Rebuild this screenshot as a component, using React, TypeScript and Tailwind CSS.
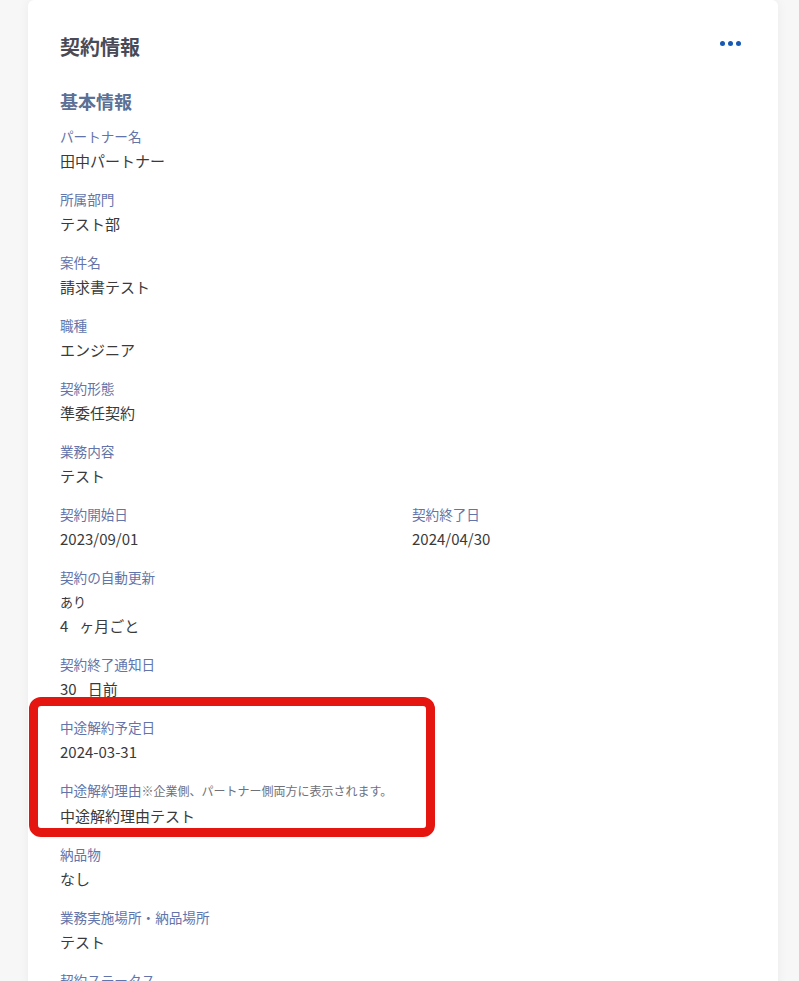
import React from "react";

const F = { fontFamily: '"Noto Sans CJK JP", "Noto Sans", sans-serif' };

function Item({ label, children, note }: { label: string; children: React.ReactNode; note?: string }) {
  return (
    <div className="mb-[16px]">
      <div className="text-[13.6px] leading-[20px] text-[#6274aa]">
        {label}
        {note && <span className="text-[12px] text-[#707078]">{note}</span>}
      </div>
      <div className="mt-[3px] text-[15px] leading-[24px] text-[#3a3a3a]">{children}</div>
    </div>
  );
}

export default function App() {
  return (
    <div style={F} className="relative min-h-[981px] w-[799px] overflow-hidden bg-[#f7f7f7]">
      <div className="ml-[28px] w-[750px] rounded-[6px] bg-white px-[32px] pb-[40px] pt-[33px] shadow-[0_0_12px_rgba(0,0,0,0.05)]">
        <div className="flex items-center justify-between">
          <h1 className="text-[20px] font-bold leading-[28px] text-[#4a4a56]">契約情報</h1>
          <button className="-mt-[8px] mr-[5px] flex items-center gap-[3px]">
            <span className="h-[5px] w-[5px] rounded-full bg-[#1658b4]" />
            <span className="h-[5px] w-[5px] rounded-full bg-[#1658b4]" />
            <span className="h-[5px] w-[5px] rounded-full bg-[#1658b4]" />
          </button>
        </div>
        <h2 className="mt-[27px] mb-[12px] text-[18px] font-bold leading-[26px] text-[#5a7096]">基本情報</h2>
        <Item label="パートナー名">田中パートナー</Item>
        <Item label="所属部門">テスト部</Item>
        <Item label="案件名">請求書テスト</Item>
        <Item label="職種">エンジニア</Item>
        <Item label="契約形態">準委任契約</Item>
        <Item label="業務内容">テスト</Item>
        <div className="grid grid-cols-2 gap-x-[18px]">
          <Item label="契約開始日">2023/09/01</Item>
          <Item label="契約終了日">2024/04/30</Item>
        </div>
        <div className="mb-[16px]">
          <div className="text-[13.6px] leading-[20px] text-[#6274aa]">契約の自動更新</div>
          <div className="mt-[5px] text-[13px] leading-[20px] text-[#3a3a3a]">あり</div>
          <div className="mt-[2px] text-[15px] leading-[24px] text-[#3a3a3a]">
            4<span className="ml-[11px]">ヶ月ごと</span>
          </div>
        </div>
        <Item label="契約終了通知日">
          30<span className="ml-[11px]">日前</span>
        </Item>
        <Item label="中途解約予定日">2024-03-31</Item>
        <Item label="中途解約理由" note="※企業側、パートナー側両方に表示されます。">中途解約理由テスト</Item>
        <Item label="納品物">なし</Item>
        <Item label="業務実施場所・納品場所">テスト</Item>
        <Item label="契約ステータス">契約中</Item>
      </div>
      <div className="pointer-events-none absolute left-[29px] top-[697px] h-[140px] w-[406px] rounded-[12px] border-[9px] border-[#e5160f]" />
    </div>
  );
}
